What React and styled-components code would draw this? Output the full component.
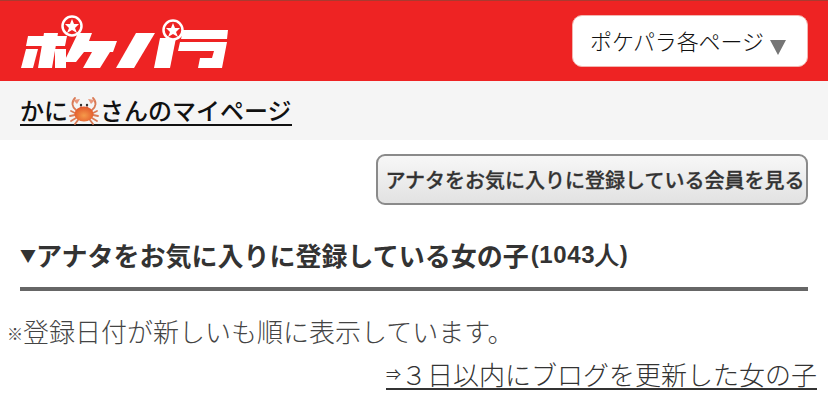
import React from "react";
import styled, { createGlobalStyle } from "styled-components";

const Global = createGlobalStyle`
  html, body { margin: 0; padding: 0; background: #fff; }
  body { font-family: "Noto Sans CJK JP", "Liberation Sans", sans-serif; }
`;

const Page = styled.div`
  width: 828px;
  height: 409px;
  overflow: hidden;
`;

const Header = styled.header`
  height: 81px;
  box-sizing: border-box;
  border-top: 1px solid #a93a30;
  background: #ee2323;
  display: flex;
  justify-content: space-between;
  padding: 14px 20px 0 20px;
`;

const Logo = styled.svg`
  width: 212px;
  height: 58px;
  display: block;
`;

const Menu = styled.div`
  width: 236px;
  height: 52px;
  box-sizing: border-box;
  background: #fff;
  border: 1px solid #f3b5b0;
  border-radius: 10px;
  display: flex;
  align-items: center;
  padding: 0 0 0 17px;
  font-size: 22px;
  font-weight: 300;
  letter-spacing: -0.1px;
  color: #111;
`;

const MenuLabel = styled.span`
  line-height: 1;
  margin-top: -3px;
`;

const MenuArrow = styled.span`
  width: 0;
  height: 0;
  margin: 13px 0 0 6px;
  border-left: 8px solid transparent;
  border-right: 8px solid transparent;
  border-top: 15px solid #757575;
`;

const SubBar = styled.div`
  height: 59px;
  background: #f5f5f5;
  display: flex;
  align-items: flex-start;
  padding: 15px 20px 0;
  box-sizing: border-box;
`;

const MyPage = styled.a`
  display: flex;
  align-items: center;
  height: 28px;
  font-size: 24px;
  font-weight: 500;
  line-height: 28px;
  color: #111;
  border-bottom: 2px solid #111;
`;

const Crab = styled.svg`
  width: 32px;
  height: 32px;
  display: block;
`;

const Actions = styled.div`
  display: flex;
  justify-content: flex-end;
  padding: 14px 20px 0;
`;

const GreyButton = styled.button`
  width: 432px;
  height: 51px;
  box-sizing: border-box;
  padding: 0 0 0 6px;
  border: 2px solid #8a8a8a;
  border-radius: 9px;
  background: linear-gradient(#f7f7f7, #e2e2e2);
  font-family: inherit;
  font-size: 20px;
  font-weight: 500;
  -webkit-text-stroke: 0.3px #333;
  color: #333;
  white-space: nowrap;
`;

const Heading = styled.h2`
  margin: 31px 20px 0;
  height: 51px;
  border-bottom: 4px solid #666;
  font-size: 26px;
  font-weight: 700;
  line-height: 38px;
  color: #333;
  display: flex;
  align-items: flex-start;
`;

const HeadMark = styled.span`
  font-size: 16px;
  width: 16px;
  flex: none;
`;

const HeadCount = styled.span`
  font-family: "Liberation Sans", sans-serif;
  font-size: 24px;
  letter-spacing: 0.6px;
  margin-left: 2px;
`;

const Notice = styled.p`
  margin: 21px 0 0 7px;
  font-size: 26px;
  font-weight: 300;
  line-height: 38px;
  color: #444;
  display: flex;
`;

const SmallMark = styled.span`
  font-size: 16px;
  font-weight: 700;
  margin-top: 2px;
  width: 16px;
  flex: none;
`;

const LinkRow = styled.div`
  display: flex;
  justify-content: flex-end;
  padding: 0 11px 0 0;
  margin-top: 7px;
`;

const BlogLink = styled.a`
  display: flex;
  align-items: center;
  font-size: 26px;
  font-weight: 300;
  line-height: 29px;
  height: 29px;
  color: #333;
  border-bottom: 2px solid #333;
`;

const Arrow = styled.span`
  font-size: 15px;
  font-weight: 400;
  width: 15px;
  flex: none;
  overflow: hidden;
`;

function PokeparaLogo() {
  return (
    <Logo viewBox="20 15 212 58">
      <g fill="#fff">
        {/* po */}
        <polygon points="28,36 67,36 65,46 26,46" />
        <polygon points="44,33 58,33 52,68 38,68" />
        <polygon points="26,49 38,49 33,68 21,68" />
        <polygon points="55,49 66,49 66,68 55,68" />
        {/* ke */}
        <polygon points="78,33 92,33 89,41 117,41 113,52 110,52 100,68 83,68 92,52 84,52 76,62 64,62" />
        {/* pa */}
        <polygon points="136,33 155,33 134,68 116,68" />
        <polygon points="160,38 176,38 170,68 154,68" />
        {/* ra */}
        <polygon points="183,30 228,30 227,39 181,39" />
        <polygon points="180,42 227,42 222,68 198,68 200,58 212,58 214,51 178,51" />
      </g>
      <circle cx="72" cy="26" r="9.5" fill="#ee2323" stroke="#fff" strokeWidth="2.5" />
      <polygon
        fill="#fff"
        points="72,19 74,24 79,24 75,28 77,33 72,30 67,33 69,28 65,24 70,24"
      />
      <circle cx="173" cy="30" r="9.5" fill="#ee2323" stroke="#fff" strokeWidth="2.5" />
      <polygon
        fill="#fff"
        points="173,23 175,28 180,28 176,32 178,37 173,34 168,37 170,32 166,28 171,28"
      />
    </Logo>
  );
}

function CrabIcon() {
  return (
    <Crab viewBox="0 0 32 32">
      <defs>
        <radialGradient id="shell" cx="50%" cy="60%" r="60%">
          <stop offset="0%" stopColor="#f59a4a" />
          <stop offset="100%" stopColor="#e2552a" />
        </radialGradient>
      </defs>
      <g fill="none" stroke="#d97a55" strokeWidth="1.8" strokeLinecap="round">
        <path d="M8 16 C4 13 3 8 7 4" />
        <path d="M24 16 C28 13 29 8 25 4" />
        <path d="M7 19 L3 17" />
        <path d="M7 21 L2 22" />
        <path d="M8 24 L3 27" />
        <path d="M10 26 L7 30" />
        <path d="M25 19 L29 17" />
        <path d="M25 21 L30 22" />
        <path d="M24 24 L29 27" />
        <path d="M22 26 L25 30" />
      </g>
      <path d="M5 6 L12 5 L9 10 Z" fill="#e9967a" />
      <path d="M27 6 L20 5 L23 10 Z" fill="#e9967a" />
      <ellipse cx="16" cy="20" rx="9.5" ry="7.5" fill="url(#shell)" />
      <path d="M13 14 L13 11" stroke="#c9583a" strokeWidth="1" />
      <path d="M19 14 L19 11" stroke="#c9583a" strokeWidth="1" />
      <circle cx="13" cy="11" r="1.2" fill="#333" />
      <circle cx="19" cy="11" r="1.2" fill="#333" />
    </Crab>
  );
}

export default function App() {
  return (
    <Page>
      <Global />
      <Header>
        <PokeparaLogo />
        <Menu>
          <MenuLabel>ポケパラ各ページ</MenuLabel>
          <MenuArrow />
        </Menu>
      </Header>
      <SubBar>
        <MyPage>
          かに
          <CrabIcon />
          さんのマイページ
        </MyPage>
      </SubBar>
      <Actions>
        <GreyButton>アナタをお気に入りに登録している会員を見る</GreyButton>
      </Actions>
      <Heading>
        <HeadMark>▼</HeadMark>
        アナタをお気に入りに登録している女の子
        <HeadCount>(1043人)</HeadCount>
      </Heading>
      <Notice>
        <SmallMark>※</SmallMark>
        登録日付が新しいも順に表示しています。
      </Notice>
      <LinkRow>
        <BlogLink>
          <Arrow>⇒</Arrow>
          ３日以内にブログを更新した女の子
        </BlogLink>
      </LinkRow>
    </Page>
  );
}
